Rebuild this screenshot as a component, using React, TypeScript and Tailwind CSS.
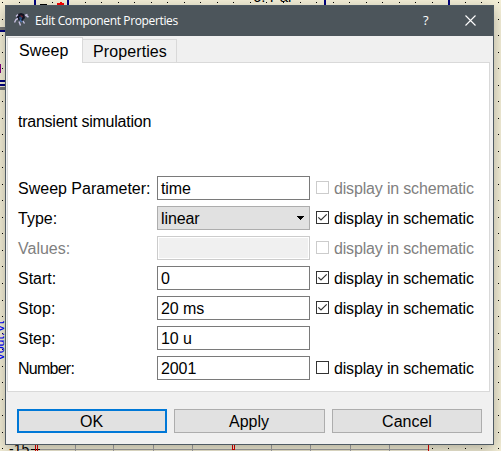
import React from "react";

type Row = {
  label: string;
  value: string;
  kind?: "select" | "disabled";
  check?: "on" | "off" | "disabled";
  tight?: boolean;
};

const rows: Row[] = [
  { label: "Sweep Parameter:", value: "time", check: "disabled" },
  { label: "Type:", value: "linear", kind: "select", check: "on" },
  { label: "Values:", value: "", kind: "disabled", check: "disabled" },
  { label: "Start:", value: "0", check: "on" },
  { label: "Stop:", value: "20 ms", check: "on" },
  { label: "Step:", value: "10 u" },
  { label: "Number:", value: "2001", check: "off", tight: true },
];

const grid = Array.from({ length: 31 }, (_, i) => Math.round(2 + i * 16.53));

/* Schematic canvas that shows around the dialog. */
function Schematic() {
  return (
    <svg className="absolute inset-0" width="501" height="451" shapeRendering="crispEdges">
      <rect width="501" height="451" fill="#f5f0d8" />
      {grid.map((x) =>
        grid
          .filter((y) => (x < 5 || x > 493 || y < 5 || y > 444) && !(y > 440 && x > 15 && x < 430))
          .map((y) => <rect key={`${x}-${y}`} x={x} y={y} width="1" height="1" fill="#000" />)
      )}
      <path d="M35 0V6M68 0V6M325 0V6M449 0V6" stroke="#000080" strokeWidth="2" />
      <path d="M40 4.500H47" stroke="#000" />
      <path d="M57 4H64M60.500 2V6" stroke="#f00" strokeWidth="2" />
      <path d="M0 28H6" stroke="#777" strokeWidth="3" />
      <path d="M0 31H6M0 81H6M0 85H6" stroke="#000080" strokeWidth="2" />
      <path d="M0 88H6" stroke="#777" strokeWidth="3" />
      <path d="M0 64V73" stroke="#800080" strokeWidth="2" />
      <path d="M17 449.500H428M75.500 444V451M113.500 444V451M153.500 444V451M192.500 444V451M271.500 444V451M310.500 444V451M350.500 444V451M389.500 444V451" stroke="#a5a5a5" />
      <path d="M31 449.500H40" stroke="#000" />
      <path d="M35.500 444V451M37.500 444V451M232.500 444V449.500H234.500V444M428.500 444V451" stroke="#e00000" fill="none" />
      <text x="253" y="1.500" fontSize="15" fontFamily="Liberation Sans, sans-serif">6. Pai</text>
      <text x="9" y="454" fontSize="14" fontFamily="Liberation Sans, sans-serif">-15</text>
      <text transform="translate(4 361) rotate(-90)" fontSize="12.5" fill="#0000ff" fontFamily="Liberation Sans, sans-serif">Vout.Vt</text>
    </svg>
  );
}

function AppIcon() {
  return (
    <svg className="mr-[5px]" width="16" height="16" viewBox="0 0 16 16">
      <path d="M4 2l3-1 3 1 1 4-3 3-4-1-1-3z" fill="#101020" />
      <path d="M5 5l3-1v3l-2 2z" fill="#234c7c" />
      <path d="M6 3l3 1-1 2z" fill="#74232f" />
      <path d="M0.500 10.500l1.500-3 2-1M2 4.500l2-2M5 9.500l1.500 4M9 9l1.500 2.500M11 3.500l2.500-1M12.500 4l2 1" fill="none" stroke="#c6bfe0" strokeWidth="1.400" />
      <path d="M6 8l2 2" stroke="#4774b2" strokeWidth="1.500" />
    </svg>
  );
}

function Check({ state }: { state: "on" | "off" | "disabled" }) {
  const disabled = state === "disabled";
  return (
    <div className={`ml-[6px] flex h-6 items-center ${disabled ? "text-[#808080]" : "text-black"}`}>
      <span className={`-mt-px mr-[5px] block h-[13px] w-[13px] border bg-white ${disabled ? "border-[#cccccc]" : "border-[#333333]"}`}>
        {state === "on" && (
          <svg className="block" width="11" height="11" viewBox="0 0 11 11" fill="none">
            <path d="M1.300 5.300L4 8L9.700 2.300" stroke="#333" strokeWidth="1.200" />
          </svg>
        )}
      </span>
      <span className="whitespace-pre pt-[2px] tracking-[-0.170px]">display in schematic</span>
    </div>
  );
}

function Field({ row }: { row: Row }) {
  const base = "flex h-6 w-[153px] shrink-0 items-center border pl-[3px]";
  if (row.kind === "select")
    return (
      <div className={`${base} justify-between border-[#adadad] bg-[#e1e1e1] pr-[5px]`}>
        <span className="pt-[2px] tracking-[-0.100px]">{row.value}</span>
        <svg width="7" height="4" viewBox="0 0 7 4" shapeRendering="crispEdges">
          <path d="M0 0h7v1h-1v1h-1v1h-1v1h-1v-1h-1v-1h-1v-1h-1z" />
        </svg>
      </div>
    );
  if (row.kind === "disabled")
    return (
      <div className="h-6 w-[153px] shrink-0 border border-[#cccccc] bg-white p-px">
        <div className="h-full bg-[#f0f0f0]" />
      </div>
    );
  return (
    <div className={`${base} border-[#7a7a7a] bg-white`}>
      <span className="pt-[2px] tracking-[-0.100px]">{row.value}</span>
    </div>
  );
}

export default function App() {
  return (
    <div className="relative h-[451px] w-[501px] overflow-hidden font-['Liberation_Sans',Arial,sans-serif] text-base leading-[18px] text-black">
      <Schematic />
      <div className="absolute left-[5px] top-[5px] flex h-[440px] w-[489px] flex-col border border-[#4f5a63] bg-[#f0f0f0] shadow-[0_4px_14px_rgba(0,0,0,0.3)]">
        <header className="flex h-[30px] shrink-0 items-center bg-[#4c555b] pb-[2px] pl-[8px] text-white">
          <AppIcon />
          <span className="whitespace-pre pt-px font-['Open_Sans','Noto_Sans',sans-serif] text-[12px] tracking-[-0.360px]">Edit Component Properties</span>
          <span className="ml-auto w-[10px] font-['Open_Sans',sans-serif] text-[13px]">?</span>
          <svg className="ml-[32px] mr-[17px]" width="11" height="11" viewBox="0 0 11 11">
            <path d="M.5 .5L10.500 10.500M10.500 .5L.5 10.500" stroke="#fff" strokeWidth="1.100" />
          </svg>
        </header>

        <nav className="flex h-[26px] shrink-0 items-end pl-px pt-[1px]">
          <div className="relative z-10 -mb-px flex h-[26px] w-[76px] items-center border border-b-0 border-[#d9d9d9] bg-white pl-[11px] tracking-[0.100px]">Sweep</div>
          <div className="flex h-[23px] w-[94px] items-center justify-center border border-b-0 border-l-0 border-[#d9d9d9] bg-[#f0f0f0] pl-px pt-[2px] tracking-[0.100px]">Properties</div>
        </nav>

        <main className="ml-px flex h-[330px] w-[483px] shrink-0 flex-col border border-[#d9d9d9] bg-white pl-[10px]">
          <p className="mt-[50px] whitespace-pre tracking-[-0.240px]">transient simulation</p>
          <div className="mt-[45px] flex flex-col gap-[6px]">
            {rows.map((row) => (
              <div key={row.label} className="flex h-6 items-center">
                <span className={`w-[139px] shrink-0 whitespace-pre pt-[2px] ${row.kind === "disabled" ? "text-[#808080]" : ""} ${row.tight ? "tracking-[-0.750px]" : ""}`}>{row.label}</span>
                <Field row={row} />
                {row.check && <Check state={row.check} />}
              </div>
            ))}
          </div>
        </main>

        <footer className="mt-[17px] flex gap-[7px] pl-[11px]">
          <button className="h-6 w-[150px] border-2 border-[#0078d7] bg-[#e1e1e1] pr-px pt-[2px]">OK</button>
          <button className="h-6 w-[151px] border border-[#adadad] bg-[#e1e1e1] pr-px pt-[2px]">Apply</button>
          <button className="h-6 w-[150px] border border-[#adadad] bg-[#e1e1e1] pt-[2px]">Cancel</button>
        </footer>
      </div>
    </div>
  );
}
